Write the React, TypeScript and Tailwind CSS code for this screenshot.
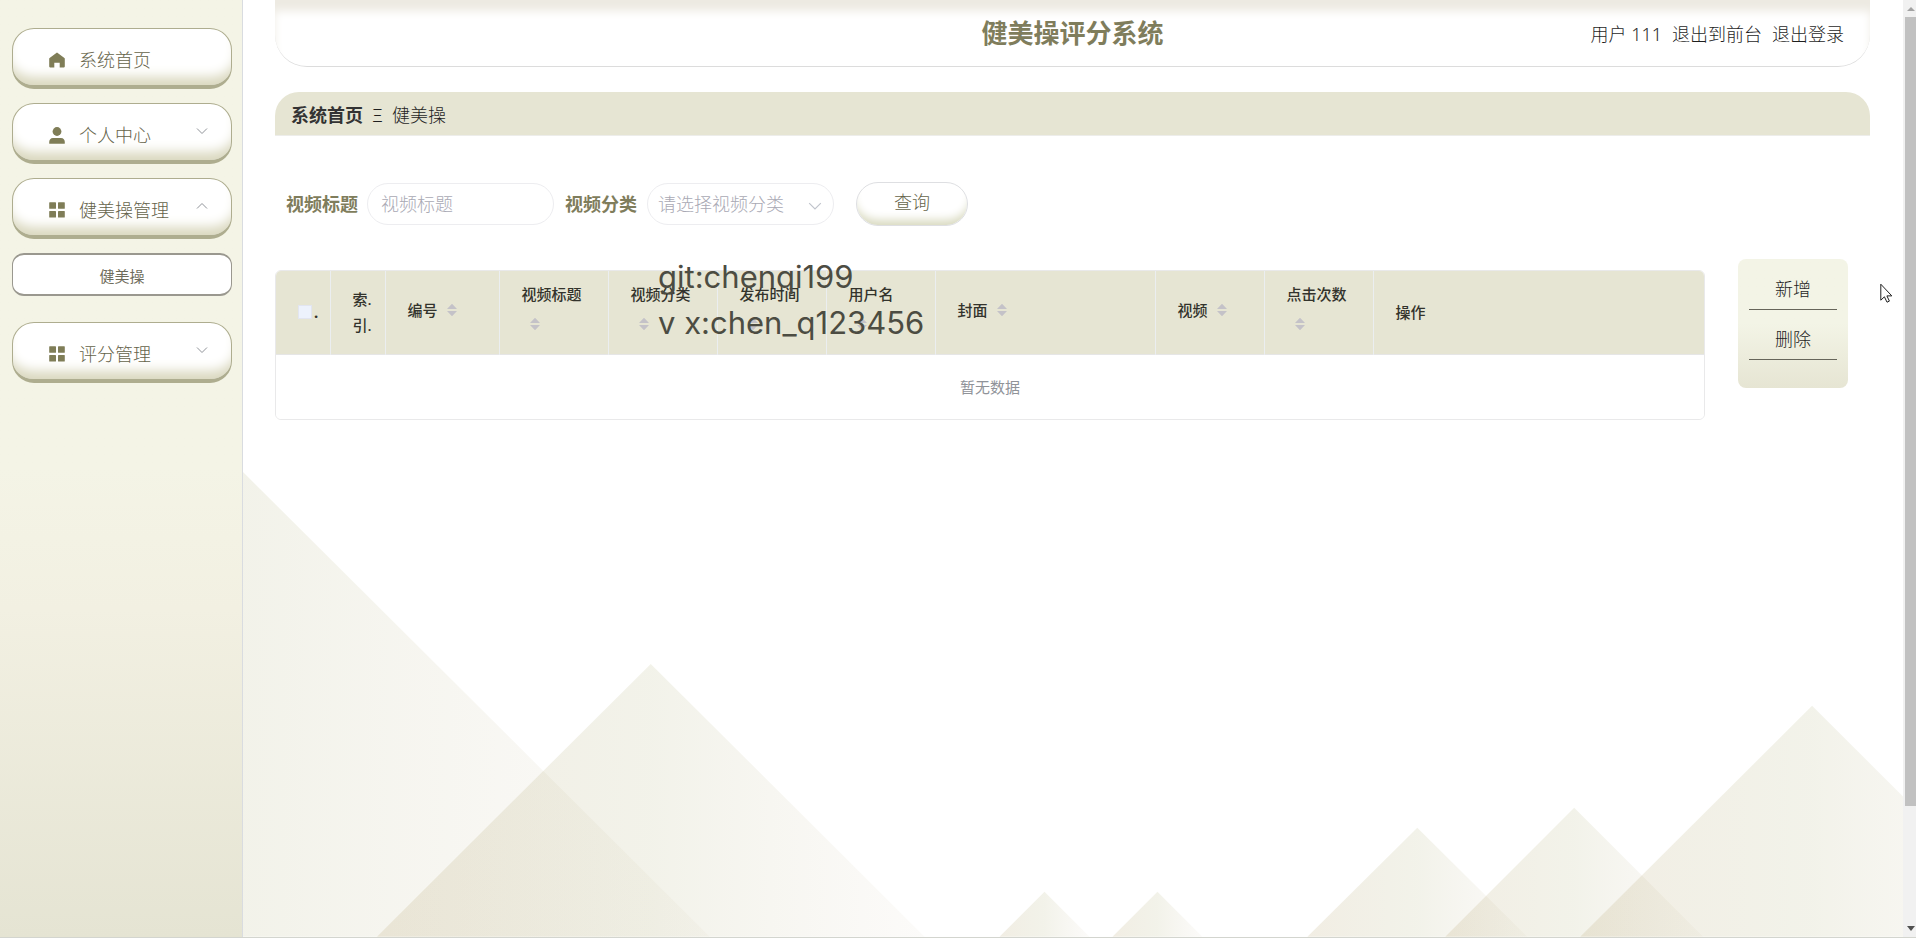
import { ReactNode } from "react";

const RULED = "border-l border-[#ebeef0]";

function HomeIcon() {
  return (
    <svg viewBox="0 0 16 16" className="size-4 shrink-0" fill="#7f7d57" aria-hidden="true">
      <path d="M8 .4 15.4 6c.3.2.4.5.4.9v7.700c0 .5-.3.8-.8.8h-4.300v-4.600H5.300v4.600H1c-.5 0-.8-.3-.8-.8V6.900c0-.4.1-.7.4-.9z" />
    </svg>
  );
}

function UserIcon() {
  return (
    <svg viewBox="0 0 16 17" className="h-[17px] w-4 shrink-0" fill="#7f7d57" aria-hidden="true">
      <circle cx="8" cy="4.500" r="4.400" />
      <path d="M4 11h8c2.400 0 3.800 1.700 3.800 4v1.200c0 .3-.2.6-.6.6H.8c-.4 0-.6-.3-.6-.6V15c0-2.300 1.400-4 3.800-4z" />
    </svg>
  );
}

function GridIcon() {
  return (
    <svg viewBox="0 0 16 16" className="size-4 shrink-0" fill="#7f7d57" aria-hidden="true">
      <rect x="0.200" y="0.200" width="6.800" height="6.600" rx="0.600" />
      <rect x="9" y="0.200" width="6.800" height="6.600" rx="0.600" />
      <rect x="0.200" y="9" width="6.800" height="6.600" rx="0.600" />
      <rect x="9" y="9" width="6.800" height="6.600" rx="0.600" />
    </svg>
  );
}

function Chevron({ up = false, className = "" }: { up?: boolean; className?: string }) {
  return (
    <svg viewBox="0 0 12 12" className={className} fill="none" stroke="currentColor" aria-hidden="true">
      <path d={up ? "M1 8.500 6 3.500l5 5" : "M1 3.500l5 5 5-5"} />
    </svg>
  );
}

function MenuItem({ icon, label, open }: { icon: ReactNode; label: string; open?: boolean }) {
  return (
    <button
      type="button"
      className="flex h-[61px] w-full items-center gap-3.5 rounded-[22px] border border-b-4 border-[#aead8f] bg-white pt-1.5 pr-[23px] pl-9 text-left text-lg leading-6 text-[#65634a] shadow-[inset_0_-14px_12px_-6px_#dad8bf]"
    >
      {icon}
      <span className="flex-1">{label}</span>
      {open !== undefined && <Chevron up={open} className="mb-2 size-3 text-[#909399]" />}
    </button>
  );
}

function SortArrows({ className = "" }: { className?: string }) {
  return (
    <svg viewBox="0 0 10 14" className={"inline-block h-3.5 w-2.5 " + className} fill="#c4c2c8" aria-hidden="true">
      <path d="M5 .8 10 6H0zM5 13.200 10 8H0z" />
    </svg>
  );
}

function SortHead({ label, stacked = false }: { label: string; stacked?: boolean }) {
  return (
    <th className={RULED + " px-[22px] font-medium"}>
      {stacked ? (
        <div className="flex flex-col items-start gap-2.5 pb-3">
          <span>{label}</span>
          <SortArrows className="ml-2" />
        </div>
      ) : (
        <div className="flex items-center gap-[9px] pb-1">
          <span>{label}</span>
          <SortArrows />
        </div>
      )}
    </th>
  );
}

const PEAKS = [
  { x: 0, y: 2, half: 467 },
  { x: 408, y: 194, half: 274 },
  { x: 802, y: 422, half: 45 },
  { x: 915, y: 422, half: 45 },
  { x: 1175, y: 358, half: 110 },
  { x: 1332, y: 338, half: 129 },
  { x: 1570, y: 236, half: 232 },
];

function Mountains() {
  return (
    <svg viewBox="0 0 1661 467" className="absolute inset-x-0 bottom-0 w-full" aria-hidden="true">
      <defs>
        <linearGradient id="slope" x1="0" y1="0" x2="1" y2="0">
          <stop offset="0" stopColor="#a58a48" stopOpacity="0.15" />
          <stop offset="0.500" stopColor="#8c8c3c" stopOpacity="0.11" />
          <stop offset="1" stopColor="#a58a5a" stopOpacity="0.035" />
        </linearGradient>
      </defs>
      {PEAKS.map((p) => (
        <polygon
          key={p.x}
          points={`${p.x - p.half},467 ${p.x},${p.y} ${p.x + p.half},467`}
          fill="url(#slope)"
        />
      ))}
    </svg>
  );
}

export default function App() {
  return (
    <div className="relative flex min-h-screen border-b border-[#d3d5cf] bg-white font-['Noto_Sans','Noto_Sans_CJK_SC',sans-serif] text-lg font-light text-[#1f1f1f]">
      <aside className="w-[243px] shrink-0 border-r border-[#d9dce0] bg-linear-to-b from-[#f4f4e6] from-50% via-[#f2f0e2] via-65% to-[#e5e4d3] px-3 pt-7">
        <nav className="flex w-[220px] flex-col gap-3.5">
          <MenuItem icon={<HomeIcon />} label="系统首页" />
          <MenuItem icon={<UserIcon />} label="个人中心" open={false} />
          <MenuItem icon={<GridIcon />} label="健美操管理" open />
          <a
            href="#aerobics"
            className="mb-3 flex h-[43px] items-center justify-center rounded-xl border border-y-2 border-[#9a988f] bg-white pt-1 text-[15px] font-normal text-[#6f6d5c]"
          >
            健美操
          </a>
          <MenuItem icon={<GridIcon />} label="评分管理" open={false} />
        </nav>
      </aside>

      <main className="relative min-w-0 flex-1 overflow-hidden pr-[33px] pl-8">
        <Mountains />
        <div className="relative">
          <header className="grid h-[67px] grid-cols-[1fr_auto_1fr] items-center rounded-b-[32px] border-b border-[#dcdcdc] px-[26px] pt-px shadow-[inset_0_12px_10px_-1px_#edeae2]">
            <h1 className="col-start-2 text-[26px] font-bold text-[#7f7d5c]">健美操评分系统</h1>
            <div className="flex items-center justify-end gap-2.5">
              <span>用户 111</span>
              <a href="#front">退出到前台</a>
              <a href="#logout">退出登录</a>
            </div>
          </header>

          <div className="mt-[25px] flex h-11 items-center gap-[9px] rounded-t-[24px] border-b border-[#ededea] bg-[#e6e5d3] px-4 pt-0.5">
            <a href="#home" className="font-bold text-[#333]">系统首页</a>
            <span>Ξ</span>
            <span>健美操</span>
          </div>

          <form className="mt-[46px] flex h-11 items-center px-[11px] font-bold text-[#7f7d5c]">
            <label htmlFor="title">视频标题</label>
            <input
              id="title"
              type="text"
              placeholder="视频标题"
              className="mr-[11px] ml-[9px] h-[42px] w-[187px] rounded-full border border-[#ededf0] bg-white px-[13px] font-light placeholder:text-[#a9a9b4]"
            />
            <label htmlFor="category">视频分类</label>
            <div className="relative ml-2.5">
              <select
                id="category"
                className="h-[42px] w-[187px] appearance-none rounded-full border border-[#ededf0] bg-white pl-2.5 font-light text-[#a9a9b4]"
              >
                <option>请选择视频分类</option>
              </select>
              <Chevron className="absolute top-4 right-3 size-3.5 text-[#c0c4cc]" />
            </div>
            <button
              type="button"
              className="ml-[22px] h-11 w-[112px] rounded-full border border-[#dedfe2] bg-white pb-1 font-light text-[#65634a] shadow-[inset_0_-10px_10px_-5px_#d9dac0]"
            >
              查询
            </button>
          </form>

          <div className="mt-[33px] flex items-start pr-[22px]">
            <div className="relative mt-[11px] min-w-0 flex-1">
              <div className="overflow-hidden rounded-md border border-[#e9e9ea]">
                <table className="w-full table-fixed text-left text-[15px] leading-[26px]">
                  <colgroup>
                    <col className="w-[54px]" />
                    <col className="w-[55px]" />
                    <col className="w-[114px]" />
                    <col className="w-[109px]" />
                    <col className="w-[109px]" />
                    <col className="w-[109px]" />
                    <col className="w-[109px]" />
                    <col className="w-[220px]" />
                    <col className="w-[109px]" />
                    <col className="w-[109px]" />
                    <col />
                  </colgroup>
                  <thead>
                    <tr className="h-[83px] border-b border-[#e6e6e6] bg-[#e6e5d3] text-[#33332c]">
                      <th className="pl-[22px] font-medium">
                        <div className="flex items-center gap-0.5">
                          <input
                            type="checkbox"
                            aria-label="全选"
                            className="size-3.5 shrink-0 appearance-none border border-[#e2e5f0] bg-[#edf2fc]"
                          />
                          <span className="font-bold">.</span>
                        </div>
                      </th>
                      <th className={RULED + " pl-[22px] font-medium"}>
                        索.
                        <br />
                        引.
                      </th>
                      <SortHead label="编号" />
                      <SortHead label="视频标题" stacked />
                      <SortHead label="视频分类" stacked />
                      <SortHead label="发布时间" stacked />
                      <SortHead label="用户名" stacked />
                      <SortHead label="封面" />
                      <SortHead label="视频" />
                      <SortHead label="点击次数" stacked />
                      <th className={RULED + " px-[22px] font-medium"}>操作</th>
                    </tr>
                  </thead>
                  <tbody>
                    <tr className="h-[65px] bg-white">
                      <td colSpan={11} className="text-center font-normal text-[#909399]">暂无数据</td>
                    </tr>
                  </tbody>
                </table>
              </div>
              <div className="pointer-events-none absolute -top-3 left-[383px] font-['Inter',sans-serif] text-[31px] leading-[46px] font-normal whitespace-nowrap text-[#4c4c42]">
                <div className="mb-1.5 h-9 overflow-hidden leading-[38px]">git:chenqi199</div>
                <div>v x:chen_q123456</div>
              </div>
            </div>

            <div className="ml-[33px] flex h-[129px] w-[110px] flex-col rounded-lg bg-linear-to-b from-[#f3f4e6] from-50% to-[#e6e5d3] px-[11px]">
              <button type="button" className="h-[51px] border-b border-[#66655a] pt-2.5">新增</button>
              <button type="button" className="h-[50px] border-b border-[#66655a] pt-2">删除</button>
            </div>
          </div>
        </div>
      </main>

      <div className="flex w-[13px] shrink-0 flex-col items-end bg-[#f1f1f1]" aria-hidden="true">
        <svg viewBox="0 0 11 17" className="h-[17px] w-[11px]" fill="#a3a3a3">
          <path d="M2 11 6 7l4 4z" />
        </svg>
        <div className="w-[11px] grow-[789] bg-[#c1c1c1]" />
        <div className="grow-[114]" />
        <svg viewBox="0 0 11 17" className="h-[17px] w-[11px]" fill="#505050">
          <path d="M2 6 6 11l4-5z" />
        </svg>
      </div>

      <svg
        viewBox="0 0 13 20"
        className="pointer-events-none absolute top-[283px] right-[23px] h-5 w-[13px]"
        fill="#fff"
        stroke="#222"
        aria-hidden="true"
      >
        <path d="M.8 1.200v16l3.600-3.400 2.600 5.400 2.400-1.100-2.500-5.200h4.900z" />
      </svg>
    </div>
  );
}
